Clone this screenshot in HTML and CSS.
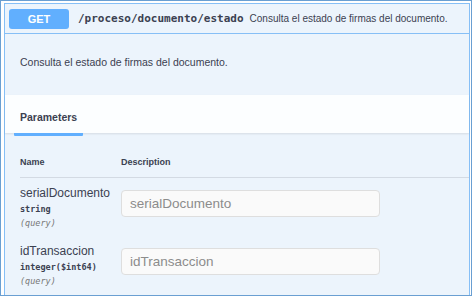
FILE: index.html
```html
<!DOCTYPE html>
<html lang="es">
<head>
<meta charset="UTF-8">
<title>GET /proceso/documento/estado</title>
<link rel="stylesheet" href="styles.css">
</head>
<body>
<div class="frame">
<div class="opblock">
<div class="summary">
<span class="method">GET</span>
<span class="path">/proceso/documento/estado</span>
<span class="summary-desc">Consulta el estado de firmas del documento.</span>
</div>

<div class="op-desc">Consulta el estado de firmas del documento.</div>

<div class="tab-header">
<h4 class="tab">Parameters</h4>
</div>

<div class="params">
<div class="params-head">
<span class="col-name">Name</span>
<span>Description</span>
</div>

<div class="param-row">
<div class="col-name">
<div class="param-name">serialDocumento</div>
<div class="param-type">string</div>
<div class="param-in">(query)</div>
</div>
<input type="text" class="param-input" placeholder="serialDocumento">
</div>

<div class="param-row">
<div class="col-name">
<div class="param-name">idTransaccion</div>
<div class="param-type">integer($int64)</div>
<div class="param-in">(query)</div>
</div>
<input type="text" class="param-input" placeholder="idTransaccion">
</div>
</div>
</div>
</div>
</body>
</html>
```

FILE: styles.css
```css
body {
margin: 0;
font-family: "Liberation Sans", Arial, sans-serif;
color: #3b4151;
background-color: #fff;
}
.frame {
box-sizing: border-box;
width: 472px;
height: 296px;
overflow: hidden;
border: 1px solid #6a9fd2;
padding: 2px 1px 0 3px;
}
.opblock {
border: 1px solid #86bff6;
border-bottom: none;
background-color: #ecf4fc;
height: 100%;
}
.summary {
display: flex;
align-items: center;
height: 29px;
padding: 0 4px;
border-bottom: 1px solid #86bff6;
}
.method {
width: 60px;
height: 20px;
line-height: 21px;
text-align: center;
background-color: #61affe;
color: #fff;
font-weight: bold;
font-size: 11px;
border-radius: 3px;
}
.path {
margin-left: 9px;
font-family: "DejaVu Sans Mono", "Liberation Mono", monospace;
font-weight: bold;
font-size: 11px;
}
.summary-desc {
margin-left: 6px;
font-size: 10px;
}
.op-desc {
box-sizing: border-box;
height: 61px;
padding: 22px 15px 0;
font-size: 10.5px;
line-height: 12px;
}
.tab-header {
box-sizing: border-box;
height: 38px;
padding: 12px 15px 0;
background-color: rgba(255, 255, 255, 0.85);
box-shadow: 0 1px 2px rgba(0, 0, 0, 0.1);
}
.tab {
display: inline-block;
margin: 0 0 0 -6px;
padding: 0 6px 10px;
font-size: 10.5px;
line-height: 12px;
font-weight: bold;
border-bottom: 3px solid #61affe;
border-radius: 1px;
}
.params {
padding: 23px 0 0 15px;
}
.params-head {
display: flex;
font-size: 9px;
font-weight: bold;
line-height: 12px;
padding-bottom: 9px;
border-bottom: 1px solid #d3dae3;
}
.col-name {
width: 101px;
flex-shrink: 0;
}
.param-row {
display: flex;
align-items: flex-start;
margin-top: 14px;
}
.params-head + .param-row {
margin-top: 7px;
}
.param-name {
font-size: 12px;
line-height: 16px;
}
.param-type {
font-family: "DejaVu Sans Mono", "Liberation Mono", monospace;
font-weight: bold;
font-size: 8.5px;
line-height: 16px;
}
.param-in {
font-family: "DejaVu Sans Mono", "Liberation Mono", monospace;
font-style: italic;
font-size: 8.5px;
line-height: 12px;
color: #777;
}
.param-input {
box-sizing: border-box;
width: 259px;
height: 27px;
margin: 5px 0 0;
padding: 0 8px;
font-family: "Liberation Sans", Arial, sans-serif;
font-size: 13.5px;
color: #3b4151;
background-color: #fafafa;
border: 1px solid #dedede;
border-radius: 4px;
}
.param-input::placeholder {
color: #8c8c8c;
}
```
